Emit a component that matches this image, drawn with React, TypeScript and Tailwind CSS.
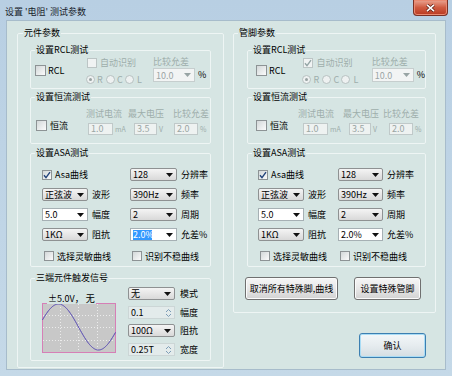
import React from "react";

const DIS = "text-[#9eaeab]";

function Arrow({ dis }: { dis?: boolean }) {
  return (
    <svg width="7" height="4" viewBox="0 0 7 4" className="shrink-0">
      <path d="M0 0h7L3.5 4z" fill={dis ? "#98a4a4" : "#111"} />
    </svg>
  );
}

type DDProps = { value: string; w: string; variant?: "btn" | "edit" | "dis"; sel?: boolean; h?: string };
function Dropdown({ value, w, variant = "btn", sel, h = "h-[13px]" }: DDProps) {
  const base =
    variant === "btn"
      ? "bg-gradient-to-b from-[#f4f4f4] to-[#d9d9d9] border-[#8e9192] rounded-[2px] text-black"
      : variant === "edit"
      ? "bg-white border-[#a6b0b4] text-black"
      : "bg-[#f2f4f4] border-[#c6cece] text-[#9aa5a5]";
  return (
    <div className={`${w} ${h} ${base} border flex items-center justify-between pl-[2px] pr-[3px] text-[9px] leading-none shrink-0`}>
      <span className={sel ? "bg-[#3399ff] text-white h-[10px] leading-[10px] w-[19px]" : ""}>{value}</span>
      <Arrow dis={variant === "dis"} />
    </div>
  );
}

function Check({ checked, dis, big }: { checked?: boolean; dis?: boolean; big?: boolean }) {
  return (
    <div
      className={`${big ? "w-[11px] h-[11px]" : "w-[10px] h-[10px]"} border ${
        dis ? "border-[#bcc5c5] bg-[#f0f3f3]" : "border-[#8d9395] bg-gradient-to-br from-[#d3d8d9] to-[#fbfbfb]"
      } flex items-center justify-center shrink-0`}
    >
      {checked && (
        <svg width="8" height="8" viewBox="0 0 8 8">
          <path d="M1 4.2 L3 6.6 L7 1.2" fill="none" stroke={dis ? "#93a5a5" : "#22437a"} strokeWidth="1.4" />
        </svg>
      )}
    </div>
  );
}

function Radio({ on }: { on?: boolean }) {
  return (
    <div className="w-[9px] h-[9px] rounded-full border border-[#b7c1c1] bg-[#eef1f1] flex items-center justify-center shrink-0">
      {on && <div className="w-[3px] h-[3px] rounded-full bg-[#98a2a2]" />}
    </div>
  );
}

function TB({ value, w }: { value: string; w: string }) {
  return (
    <div className={`${w} h-[12px] border border-[#c0c9c9] bg-[#eef2f1] text-[#9aa6a4] text-[9px] leading-[10px] pl-[2px] shrink-0`}>
      {value}
    </div>
  );
}

function Spin({ value }: { value: string }) {
  return (
    <div className="w-[47px] h-[13px] bg-[#e3ebeb] border border-[#ccd6d6] flex items-center justify-between pl-[2px] pr-[2px] text-[9px] leading-none shrink-0">
      <span>{value}</span>
      <svg width="7" height="10" viewBox="0 0 7 10">
        <path d="M1 4 L3.5 1.5 L6 4 M1 6 L3.5 8.5 L6 6" fill="none" stroke="#7d9db7" strokeWidth="1" />
      </svg>
    </div>
  );
}

function Group({ title, className, children, tl = "left-[4px]" }: { title: string; className: string; children?: React.ReactNode; tl?: string }) {
  return (
    <div className={`relative border border-[#eef5f4] rounded-[2px] shrink-0 ${className}`}>
      <span className={`absolute ${tl} top-[-7px] px-[1px] bg-[#d6e5e3] text-[9px] leading-[12px] whitespace-nowrap`}>{title}</span>
      {children}
    </div>
  );
}

function Btn({ children, className }: { children: React.ReactNode; className: string }) {
  return (
    <div
      className={`border border-[#707070] rounded-[3px] bg-gradient-to-b from-[#f6f6f6] via-[#e8e8e8] to-[#d2d2d2] shadow-[inset_0_0_0_1px_#fbfbfb] flex items-center justify-center text-[9px] leading-none shrink-0 ${className}`}
    >
      {children}
    </div>
  );
}

function RCLGroup({ right }: { right?: boolean }) {
  return (
    <Group title="设置RCL测试" className={`${right ? "w-[179px]" : "w-[181px]"} h-[39px] mt-[16px]`}>
      <div className="flex text-[9px]">
        <div className={`w-[54px] ${right ? "pl-[8px]" : "pl-[4px]"} pt-[14px]`}>
          <div className="flex items-center gap-[2px] h-[11px]">
            <Check big />
            <span className="leading-[11px]">RCL</span>
          </div>
        </div>
        <div className={`${right ? "w-[71px]" : "w-[68px]"} pt-[6px]`}>
          <div className="flex items-center gap-[3px] h-[11px] ml-[2px]">
            <Check dis checked={right} />
            <span className={DIS}>自动识别</span>
          </div>
          <div className={`flex items-center mt-[7px] h-[9px] ml-[1px] ${DIS}`}>
            <div className="w-[20px] flex items-center gap-[2px]"><Radio on /><span>R</span></div>
            <div className="w-[19px] flex items-center gap-[2px]"><Radio /><span>C</span></div>
            <div className="flex items-center gap-[3px]"><Radio /><span>L</span></div>
          </div>
        </div>
        <div className="pt-[5px]">
          <div className={`leading-[12px] ${DIS}`}>比较允差</div>
          <div className="flex items-center gap-[3px]">
            <Dropdown value="10.0" w="w-[42px]" variant="dis" h="h-[14px]" />
            <span>%</span>
          </div>
        </div>
      </div>
    </Group>
  );
}

function CCGroup({ right }: { right?: boolean }) {
  const cols = right
    ? [
        { w: "w-[45px]", ml: "ml-[5px]", l: "测试电流", v: "1.0", u: "mA", tw: "w-[25px]" },
        { w: "w-[40px]", ml: "ml-[6px]", l: "最大电压", v: "3.5", u: "V", tw: "w-[22px]" },
        { w: "", ml: "ml-[6px]", l: "比较允差", v: "2.0", u: "%", tw: "w-[24px]" },
      ]
    : [
        { w: "w-[42px]", ml: "ml-[2px]", l: "测试电流", v: "1.0", u: "mA", tw: "w-[25px]" },
        { w: "w-[45px]", ml: "ml-[6px]", l: "最大电压", v: "3.5", u: "V", tw: "w-[23px]" },
        { w: "", ml: "ml-[1px]", l: "比较允差", v: "2.0", u: "%", tw: "w-[24px]" },
      ];
  return (
    <Group title="设置恒流测试" className={`${right ? "w-[179px]" : "w-[181px]"} h-[47px] mt-[8px]`}>
      <div className="flex text-[9px]">
        <div className={`${right ? "w-[50px] pl-[8px]" : "w-[55px] pl-[5px]"} pt-[22px]`}>
          <div className="flex items-center gap-[3px] h-[11px]">
            <Check big />
            <span>恒流</span>
          </div>
        </div>
        {cols.map((c, i) => (
          <div key={i} className={`${c.w} pt-[10px] shrink-0`}>
            <div className={`leading-[12px] whitespace-nowrap ${DIS}`}>{c.l}</div>
            <div className={`flex items-center mt-[3px] ${c.ml}`}>
              <TB value={c.v} w={c.tw} />
              <span className={`ml-[2px] text-[7px] ${DIS}`}>{c.u}</span>
            </div>
          </div>
        ))}
      </div>
    </Group>
  );
}

function ASAGroup({ right }: { right?: boolean }) {
  const cw = right ? "w-[80px]" : "w-[88px]";
  const rw = right ? "w-[45px]" : "w-[47px]";
  const Cell = ({ dd, label }: { dd: React.ReactNode; label: string }) => (
    <div className="flex items-center">
      {dd}
      <span className="ml-[4px] whitespace-nowrap">{label}</span>
    </div>
  );
  return (
    <Group title="设置ASA测试" className={`${right ? "w-[179px]" : "w-[181px]"} h-[114px] mt-[9px]`}>
      <div className={`${right ? "pl-[10px]" : "pl-[11px]"} pt-[14px] flex flex-col text-[9px] leading-none`}>
        <div className="flex items-center h-[13px]">
          <div className={`${cw} flex items-center gap-[3px]`}>
            <Check checked />
            <span>Asa曲线</span>
          </div>
          <Cell dd={<Dropdown value="128" w={rw} />} label="分辨率" />
        </div>
        <div className="flex items-center h-[13px] mt-[7px]">
          <div className={cw}><Cell dd={<Dropdown value="正弦波" w="w-[46px]" />} label="波形" /></div>
          <Cell dd={<Dropdown value="390Hz" w={rw} />} label="频率" />
        </div>
        <div className="flex items-center h-[13px] mt-[7px]">
          <div className={cw}><Cell dd={<Dropdown value="5.0" w="w-[46px]" variant="edit" />} label="幅度" /></div>
          <Cell dd={<Dropdown value="2" w={rw} />} label="周期" />
        </div>
        <div className="flex items-center h-[13px] mt-[7px]">
          <div className={cw}><Cell dd={<Dropdown value="1KΩ" w="w-[46px]" />} label="阻抗" /></div>
          <Cell dd={<Dropdown value="2.0%" w={rw} variant="edit" sel={!right} />} label="允差%" />
        </div>
        <div className="flex items-center h-[10px] mt-[10px]">
          <div className={`${cw} flex items-center gap-[3px] pl-[2px]`}>
            <Check />
            <span>选择灵敏曲线</span>
          </div>
          <div className="flex items-center gap-[3px] pl-[2px]">
            <Check />
            <span>识别不稳曲线</span>
          </div>
        </div>
      </div>
    </Group>
  );
}

function Graph() {
  const pts: string[] = [];
  for (let x = 0; x <= 73; x += 1) {
    const y = 24 - 23 * Math.sin((2 * Math.PI * (x + 4)) / 80);
    pts.push(`${(x + 0.5).toFixed(1)},${y.toFixed(2)}`);
  }
  return (
    <div className="relative w-[74px] h-[50px]">
      <svg width="74" height="50" className="block">
        <rect x="0.5" y="0.5" width="73" height="49" fill="#c8c8c8" stroke="#d67fb6" />
        {[18.5, 36.5, 55.5].map((x) => (
          <line key={x} x1={x} y1="1" x2={x} y2="49" stroke="#ececec" strokeDasharray="1 2" />
        ))}
        {[12.5, 24.5, 37.5].map((y) => (
          <line key={y} x1="1" y1={y} x2="73" y2={y} stroke="#ececec" strokeDasharray="1 2" />
        ))}
        <polyline points={pts.join(" ")} fill="none" stroke="#5447b2" strokeWidth="1" />
      </svg>
      <span className="absolute left-[5px] top-[-9px] text-[9px] leading-[10px] whitespace-nowrap px-[1px] bg-[#d6e5e3]">±5.0V， 无</span>
    </div>
  );
}

function TriGroup() {
  return (
    <Group title="三端元件触发信号" className="w-[181px] h-[83px] mt-[11px]">
      <div className="flex text-[9px] leading-none">
        <div className="pl-[11px] pt-[24px]">
          <Graph />
        </div>
        <div className="ml-[12px] pt-[8px] flex flex-col">
          <div className="flex items-center">
            <Dropdown value="无" w="w-[47px]" />
            <span className="ml-[5px]">模式</span>
          </div>
          <div className="flex items-center mt-[6px]">
            <Spin value="0.1" />
            <span className="ml-[5px]">幅度</span>
          </div>
          <div className="flex items-center mt-[5px]">
            <Dropdown value="100Ω" w="w-[47px]" />
            <span className="ml-[5px]">阻抗</span>
          </div>
          <div className="flex items-center mt-[6px]">
            <Spin value="0.25T" />
            <span className="ml-[5px]">宽度</span>
          </div>
        </div>
      </div>
    </Group>
  );
}

export default function App() {
  return (
    <div className="w-[452px] h-[376px] bg-gradient-to-b from-[#b8cfe3] to-[#c5d9e8] flex flex-col overflow-hidden font-['Noto_Sans_CJK_SC','Noto_Sans',sans-serif] text-black">
      <div className="h-[20px] flex items-start justify-between shrink-0">
        <span className="pl-[5px] pt-[6px] text-[9px] leading-[12px] text-[#17222b] whitespace-nowrap">设置 '电阻' 测试参数</span>
        <div className="mr-[4px] w-[35px] h-[16px] rounded-b-[4px] border border-t-0 border-[#7a3126] bg-gradient-to-b from-[#e9a593] via-[#cf5b41] to-[#b93820] shadow-[inset_0_0_0_1px_#e98a72] flex items-center justify-center">
          <svg width="9" height="8" viewBox="0 0 9 8">
            <path d="M1 0.8 L8 7.2 M8 0.8 L1 7.2" stroke="#5a1a10" strokeWidth="3" />
            <path d="M1 0.8 L8 7.2 M8 0.8 L1 7.2" stroke="#ffffff" strokeWidth="1.6" />
          </svg>
        </div>
      </div>
      <div className="mx-[6px] h-[350px] bg-[#d6e5e3] border border-[#a7bccb] flex items-start shrink-0">
        <Group title="元件参数" tl="left-[5px]" className="ml-[10px] mt-[12px] w-[207px] h-[335px]">
          <div className="flex flex-col pl-[12px]">
            <RCLGroup />
            <CCGroup />
            <ASAGroup />
            <TriGroup />
          </div>
        </Group>
        <div className="ml-[9px] mt-[12px] flex flex-col">
          <Group title="管脚参数" className="w-[203px] h-[280px]">
            <div className="flex flex-col">
              <div className="ml-[13px] flex flex-col">
                <RCLGroup right />
                <CCGroup right />
                <ASAGroup right />
              </div>
              <div className="ml-[11px] mt-[10px] flex gap-[16px]">
                <Btn className="w-[93px] h-[23px]">取消所有特殊脚,曲线</Btn>
                <Btn className="w-[67px] h-[23px]">设置特殊管脚</Btn>
              </div>
            </div>
          </Group>
          <div className="ml-[126px] mt-[20px] w-[67px] h-[25px] border border-[#3c7fb1] rounded-[3px] bg-gradient-to-b from-[#f3f7f9] via-[#e6ecef] to-[#d4dde2] shadow-[inset_0_0_0_1px_#a9dcf5] flex items-center justify-center text-[9px] leading-none">
            确认
          </div>
        </div>
      </div>
    </div>
  );
}
